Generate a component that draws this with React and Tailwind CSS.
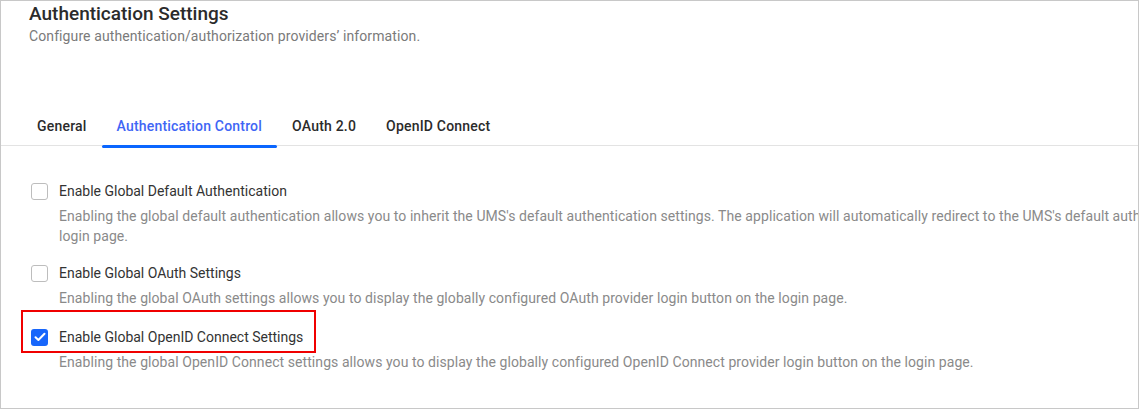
import { useState } from "react";

const tabs = ["General", "Authentication Control", "OAuth 2.0", "OpenID Connect"];

const options = [
    {
        label: "Enable Global Default Authentication",
        text: "Enabling the global default authentication allows you to inherit the UMS's default authentication settings. The application will automatically redirect to the UMS's default authentication login page.",
        checked: false,
    },
    {
        label: "Enable Global OAuth Settings",
        text: "Enabling the global OAuth settings allows you to display the globally configured OAuth provider login button on the login page.",
        checked: false,
    },
    {
        label: "Enable Global OpenID Connect Settings",
        text: "Enabling the global OpenID Connect settings allows you to display the globally configured OpenID Connect provider login button on the login page.",
        checked: true,
        marked: true,
    },
];

function Checkbox({ checked, onChange }) {
    return (
        <button
            type="button"
            onClick={onChange}
            className={
                checked
                    ? "w-[17px] h-[17px] rounded-[3px] bg-[#1766fb] flex items-center justify-center shrink-0"
                    : "w-[17px] h-[17px] rounded-[3px] border border-[#bdbdbd] bg-white shrink-0"
            }
        >
            {checked && (
                <svg width="12" height="10" viewBox="0 0 12 10" fill="none">
                    <path d="M1.5 5.2 4.4 8 10.5 1.8" stroke="white" strokeWidth="2" strokeLinecap="round" strokeLinejoin="round" />
                </svg>
            )}
        </button>
    );
}

function App() {
    const [active, setActive] = useState(1);
    const [values, setValues] = useState(options.map((o) => o.checked));

    const toggle = (i) => setValues(values.map((v, j) => (j === i ? !v : v)));

    return (
        <div className="w-[1140px] h-[410px] bg-white overflow-hidden font-['Roboto',sans-serif]">
            <div className="w-[1139px] h-[409px] border border-[#c8c8c8] overflow-hidden">
                <div className="pl-[28px]">
                    <h1 className="text-[19px] leading-[26px] font-medium text-[#2b2b2b]">
                        Authentication Settings
                    </h1>
                    <p className="text-[14px] tracking-[0.1px] leading-[18px] text-[#7a7a7a]">
                        Configure authentication/authorization providers’ information.
                    </p>
                </div>

                <div className="mt-[61px] flex pl-[21px] border-b border-[#e3e3e3] h-[40px]">
                    {tabs.map((t, i) => (
                        <button
                            key={t}
                            type="button"
                            onClick={() => setActive(i)}
                            className={
                                i === active
                                    ? "relative px-[15px] h-[40px] flex items-center text-[14px] tracking-[0.2px] font-medium text-[#3f66f5]"
                                    : "relative px-[15px] h-[40px] flex items-center text-[14px] tracking-[0.2px] font-medium text-[#2b2b2b]"
                            }
                        >
                            {t}
                            {i === active && (
                                <span className="absolute left-0 right-0 bottom-[-2px] h-[3px] rounded-full bg-[#0a66ff]" />
                            )}
                        </button>
                    ))}
                </div>

                <div className="pl-[30px] pt-[35px] flex flex-col">
                    {options.map((o, i) => (
                        <div key={o.label} className={i === 0 ? "" : i === 1 ? "mt-[17px]" : "mt-[19px]"}>
                            <div className="relative flex items-center gap-[11px] h-[20px]">
                                {o.marked && (
                                    <span className="absolute left-[-10px] top-[-17px] w-[295px] h-[43px] border-2 border-[#f00000]" />
                                )}
                                <Checkbox checked={values[i]} onChange={() => toggle(i)} />
                                <span className="text-[14px] leading-[20px] text-[#333333]">{o.label}</span>
                            </div>
                            <p className="ml-[28px] mt-[5px] w-[1160px] text-[14px] tracking-[0.07px] leading-[20px] text-[#8a8a8a]">
                                {o.text}
                            </p>
                        </div>
                    ))}
                </div>
            </div>
        </div>
    );
}

export default App;
